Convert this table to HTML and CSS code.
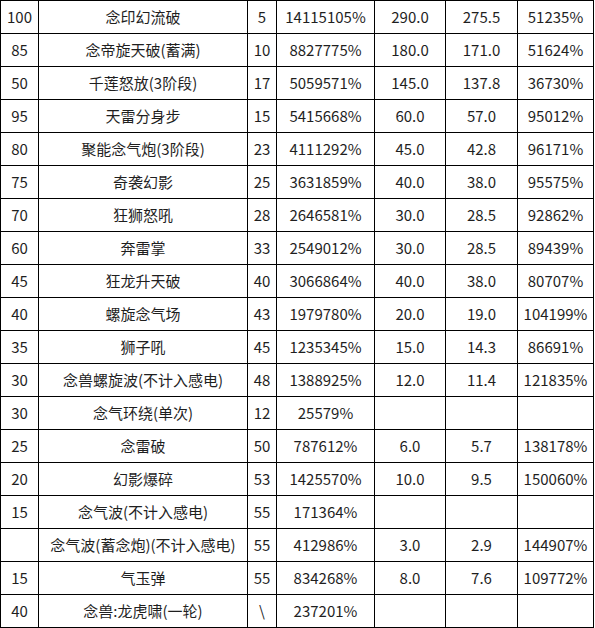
FILE: index.html
```html
<!DOCTYPE html>
<html lang="zh">
<head>
<meta charset="utf-8">
<link rel="stylesheet" href="styles.css">
</head>
<body>
<table class="skills">
<colgroup>
<col class="c1"><col class="c2"><col class="c3"><col class="c4"><col class="c5"><col class="c6"><col class="c7">
</colgroup>
<tbody>
<tr><td>100</td><td>念印幻流破</td><td>5</td><td>14115105%</td><td>290.0</td><td>275.5</td><td>51235%</td></tr>
<tr><td>85</td><td>念帝旋天破(蓄满)</td><td>10</td><td>8827775%</td><td>180.0</td><td>171.0</td><td>51624%</td></tr>
<tr><td>50</td><td>千莲怒放(3阶段)</td><td>17</td><td>5059571%</td><td>145.0</td><td>137.8</td><td>36730%</td></tr>
<tr><td>95</td><td>天雷分身步</td><td>15</td><td>5415668%</td><td>60.0</td><td>57.0</td><td>95012%</td></tr>
<tr><td>80</td><td>聚能念气炮(3阶段)</td><td>23</td><td>4111292%</td><td>45.0</td><td>42.8</td><td>96171%</td></tr>
<tr><td>75</td><td>奇袭幻影</td><td>25</td><td>3631859%</td><td>40.0</td><td>38.0</td><td>95575%</td></tr>
<tr><td>70</td><td>狂狮怒吼</td><td>28</td><td>2646581%</td><td>30.0</td><td>28.5</td><td>92862%</td></tr>
<tr><td>60</td><td>奔雷掌</td><td>33</td><td>2549012%</td><td>30.0</td><td>28.5</td><td>89439%</td></tr>
<tr><td>45</td><td>狂龙升天破</td><td>40</td><td>3066864%</td><td>40.0</td><td>38.0</td><td>80707%</td></tr>
<tr><td>40</td><td>螺旋念气场</td><td>43</td><td>1979780%</td><td>20.0</td><td>19.0</td><td>104199%</td></tr>
<tr><td>35</td><td>狮子吼</td><td>45</td><td>1235345%</td><td>15.0</td><td>14.3</td><td>86691%</td></tr>
<tr><td>30</td><td>念兽螺旋波(不计入感电)</td><td>48</td><td>1388925%</td><td>12.0</td><td>11.4</td><td>121835%</td></tr>
<tr><td>30</td><td>念气环绕(单次)</td><td>12</td><td>25579%</td><td></td><td></td><td></td></tr>
<tr><td>25</td><td>念雷破</td><td>50</td><td>787612%</td><td>6.0</td><td>5.7</td><td>138178%</td></tr>
<tr><td>20</td><td>幻影爆碎</td><td>53</td><td>1425570%</td><td>10.0</td><td>9.5</td><td>150060%</td></tr>
<tr><td>15</td><td>念气波(不计入感电)</td><td>55</td><td>171364%</td><td></td><td></td><td></td></tr>
<tr><td></td><td>念气波(蓄念炮)(不计入感电)</td><td>55</td><td>412986%</td><td>3.0</td><td>2.9</td><td>144907%</td></tr>
<tr><td>15</td><td>气玉弹</td><td>55</td><td>834268%</td><td>8.0</td><td>7.6</td><td>109772%</td></tr>
<tr><td>40</td><td>念兽:龙虎啸(一轮)</td><td>\</td><td>237201%</td><td></td><td></td><td></td></tr>
</tbody>
</table>
</body>
</html>
```
FILE: styles.css
```css
html, body {
  margin: 0;
  padding: 0;
  background: #ffffff;
}

.skills {
  border-collapse: collapse;
  table-layout: fixed;
  width: 594px;
  font-family: "Microsoft YaHei", "Noto Sans CJK SC", "Noto Sans", sans-serif;
  font-size: 15px;
  color: #1f1f1f;
}

.c1 { width: 38px; }
.c2 { width: 209px; }
.c3 { width: 29px; }
.c4 { width: 98px; }
.c5 { width: 71px; }
.c6 { width: 72px; }
.c7 { width: 76px; }

.skills tr {
  height: 33px;
}

.skills td {
  border: 1px solid #000000;
  padding: 0;
  text-align: center;
  vertical-align: middle;
  white-space: nowrap;
  overflow: hidden;
  line-height: 20px;
}
```
